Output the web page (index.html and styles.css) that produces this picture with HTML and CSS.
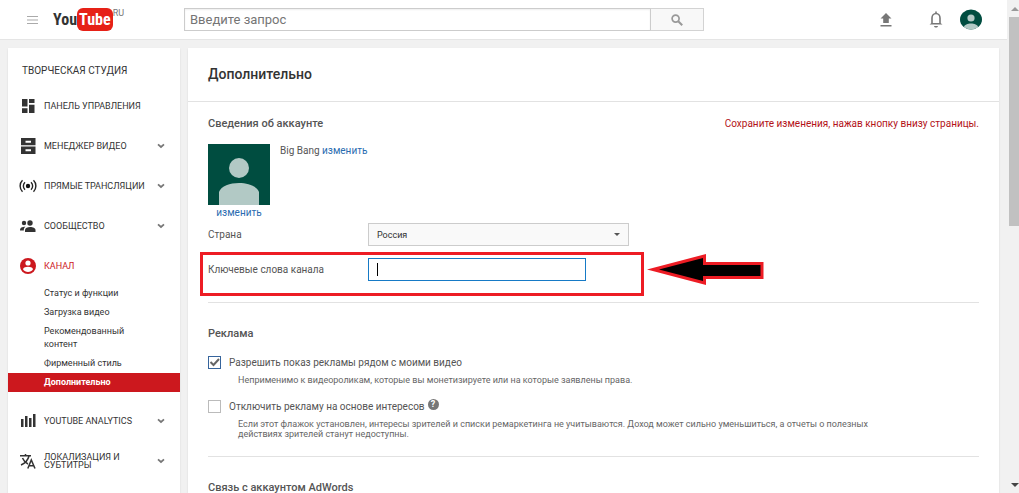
FILE: index.html
```html
<!DOCTYPE html>
<html lang="ru">
<head>
<meta charset="utf-8">
<title>Дополнительно - YouTube</title>
<link rel="stylesheet" href="styles.css">
</head>
<body>
<svg class="defs" aria-hidden="true">
  <symbol id="chevron" viewBox="0 0 8 6"><path d="M1 1.300L4 4l3-2.700" fill="none" stroke="#777" stroke-width="1.700"/></symbol>
  <symbol id="person" viewBox="0 0 62 61"><path fill="#004d40" d="M0 0h62v61H0z"/><circle cx="31" cy="24" r="10" fill="#b2c9c5"/><path d="M11 61V48C13 42 22 39 31 39s18 3 20 9v13z" fill="#b2c9c5"/></symbol>
</svg>
<div class="app">
  <div class="page">
    <header class="topbar">
      <button class="icon-btn menu" aria-label="Меню"><svg width="11" height="10" viewBox="0 0 11 10"><path d="M0 1.500h11M0 5h11M0 8.500h11" stroke="#aaa" stroke-width="1.200"/></svg></button>
      <a href="#" class="logo"><span class="you">You</span><span class="tube">Tube</span><span class="region">RU</span></a>
      <form class="search">
        <input class="search-input" type="text" placeholder="Введите запрос" aria-label="Поиск">
        <button class="search-btn" type="button" aria-label="Найти"><svg width="12" height="12" viewBox="0 0 12 12"><circle cx="4.600" cy="4.600" r="3.500" fill="none" stroke="#999" stroke-width="1.700"/><path d="M7.200 7.200l4 4" stroke="#999" stroke-width="2"/></svg></button>
      </form>
      <div class="actions">
        <button class="icon-btn" aria-label="Добавить видео"><svg width="12" height="14" viewBox="0 0 12 14"><path d="M6 0l5.500 5.500H8.800V10H3.200V5.500H.5zM.5 12h11v1.500H.5z" fill="#777"/></svg></button>
        <button class="icon-btn bell" aria-label="Уведомления"><svg width="14" height="17" viewBox="0 0 14 17"><path d="M3 12.500V7a4 4.500 0 0 1 8 0v5.500M7 2.500V0.500" fill="none" stroke="#777" stroke-width="1.600"/><path d="M0.500 13.500L2.500 12h9l2 1.500zM5 15h4c-.4 2-3.600 2-4 0z" fill="#777"/></svg></button>
        <button class="icon-btn" aria-label="Аккаунт"><svg class="me" width="22" height="21" viewBox="0 0 22 21"><ellipse cx="11" cy="10.500" rx="11" ry="10" fill="#004d40"/><circle cx="11" cy="9" r="3.600" fill="#b2c9c5"/><path d="M4 18c0-2 4-3.500 7-3.500s7 1.500 7 3.500c-3 3.300-11 3.300-14 0z" fill="#b2c9c5"/></svg></button>
      </div>
    </header>
    <div class="columns">
      <nav class="sidebar">
        <h2 class="side-title">ТВОРЧЕСКАЯ СТУДИЯ</h2>
        <a href="#" class="item"><svg class="ico" viewBox="0 0 16 16"><path fill="#333" d="M2 1h5.500v7.500H2zM9 1h5.500v4H9zM2 10.300h5.500V15H2zM9 6.800h5.500V15H9z"/></svg><span class="name">ПАНЕЛЬ УПРАВЛЕНИЯ</span></a>
        <a href="#" class="item"><svg class="ico" viewBox="0 0 16 16"><path fill="#333" fill-rule="evenodd" d="M1 0h14.500v7.300H1zM5.500 2.800v2h5.500v-2zM1 8.500h14.500V16H1zM5.500 11.300v2h5.500v-2z"/></svg><span class="name">МЕНЕДЖЕР ВИДЕО</span><svg class="chev"><use href="#chevron"/></svg></a>
        <a href="#" class="item"><svg class="ico" viewBox="0 0 16 16"><circle cx="8" cy="8" r="2.200" fill="#111"/><path d="M5 4.300a5 5 0 0 0 0 7.400M11 4.300a5 5 0 0 1 0 7.400M2.500 2.300a8 8 0 0 0 0 11.400M13.500 2.300a8 8 0 0 1 0 11.400" fill="none" stroke="#222" stroke-width="1.400"/></svg><span class="name">ПРЯМЫЕ ТРАНСЛЯЦИИ</span><svg class="chev"><use href="#chevron"/></svg></a>
        <a href="#" class="item"><svg class="ico" viewBox="0 0 16 16"><circle cx="4" cy="5" r="2.200" fill="#333"/><circle cx="10" cy="5" r="2.700" fill="#333"/><path fill="#333" d="M0 12.500C0 9.500 2 8.700 5.500 8.700 4 9.700 3.800 11 3.800 12.500zM5 14v-2c0-2 2.500-3 5.200-3s5.300 1 5.300 3v2z"/></svg><span class="name">СООБЩЕСТВО</span><svg class="chev"><use href="#chevron"/></svg></a>
        <a href="#" class="item active"><svg class="ico" viewBox="0 0 16 16"><circle cx="8" cy="8" r="8" fill="#cc181e"/><circle cx="8" cy="5" r="2.600" fill="#fff"/><path d="M3 11.300C3.300 9.500 6 8.800 8 8.800s4.700.7 5 2.500C12 13 10 14 8 14s-4-1-5-2.700z" fill="#fff"/></svg><span class="name">КАНАЛ</span></a>
        <ul class="sub">
          <li><a href="#">Статус и функции</a></li>
          <li><a href="#">Загрузка видео</a></li>
          <li><a href="#">Рекомендованный контент</a></li>
          <li><a href="#">Фирменный стиль</a></li>
          <li><a href="#" class="current">Дополнительно</a></li>
        </ul>
        <a href="#" class="item"><svg class="ico" viewBox="0 0 16 16"><path fill="#333" d="M1 6h2.500v8H1zM5 3h2.500v11H5zM9 5h2.500v9H9zM13 1h2.500v13H13z"/></svg><span class="name">YOUTUBE ANALYTICS</span><svg class="chev"><use href="#chevron"/></svg></a>
        <a href="#" class="item"><svg class="ico" viewBox="0 0 16 16"><path fill="none" stroke="#333" stroke-width="1.500" d="M0 2.800h11M5.500 1v2M9 3C8 7 4.500 10.500 1 12M2.500 5c1 2.500 3.500 5 5.500 6M7.800 15.500l3.500-8.500 3.700 8.500M9 12.700h4.700"/></svg><span class="name">ЛОКАЛИЗАЦИЯ И СУБТИТРЫ</span><svg class="chev"><use href="#chevron"/></svg></a>
      </nav>
      <main class="content">
        <h1 class="title">Дополнительно</h1>
        <section class="section account">
          <div class="section-head"><h2>Сведения об аккаунте</h2><p class="warning">Сохраните изменения, нажав кнопку внизу страницы.</p></div>
          <div class="profile">
            <div class="photo"><svg width="62" height="61"><use href="#person"/></svg><a href="#" class="link">изменить</a></div>
            <p class="channel">Big Bang <a href="#" class="link">изменить</a></p>
          </div>
          <div class="field"><label for="country">Страна</label><select id="country" class="country"><option>Россия</option></select></div>
          <div class="field keywords"><label for="keywords">Ключевые слова канала</label><span class="box"><input id="keywords" type="text"><i class="caret"></i></span>
            <div class="frame"></div>
            <svg class="arrow" width="119" height="33" viewBox="0 0 119 33"><path d="M0 16.500L59 1v8h57.500v17H59v6z" fill="#ed1c24"/><path d="M12 16.500L56 5v7h57.500v11H56v5z" fill="#000"/></svg>
          </div>
        </section>
        <section class="section ads">
          <h2>Реклама</h2>
          <div class="option"><input type="checkbox" id="allow" checked><label for="allow">Разрешить показ рекламы рядом с моими видео</label></div>
          <p class="hint">Неприменимо к видеороликам, которые вы монетизируете или на которые заявлены права.</p>
          <div class="option second"><input type="checkbox" id="disable"><label for="disable">Отключить рекламу на основе интересов</label><button class="help" aria-label="Справка">?</button></div>
          <p class="hint">Если этот флажок установлен, интересы зрителей и списки ремаркетинга не учитываются. Доход может сильно уменьшиться, а отчеты о полезных действиях зрителей станут недоступны.</p>
        </section>
        <section class="section"><h2>Связь с аккаунтом AdWords</h2></section>
      </main>
    </div>
  </div>
  <div class="scrollbar"><svg width="8" height="4" viewBox="0 0 8 4"><path d="M0 4l4-4 4 4z" fill="#999"/></svg><span class="thumb"></span><svg width="8" height="4" viewBox="0 0 8 4"><path d="M0 0h8L4 4z" fill="#444"/></svg></div>
</div>
</body>
</html>
```
FILE: styles.css
```css
* { box-sizing: border-box; }
body { margin: 0; background: #f1f1f1; color: #555; font: 11px/14px Roboto, "Liberation Sans", sans-serif; }
h1, h2, p, ul { margin: 0; padding: 0; }
a { color: inherit; text-decoration: none; }
button, input, select { font: inherit; margin: 0; }
svg { display: block; flex: none; }
.defs { position: absolute; width: 0; height: 0; }

.app { display: flex; height: 100vh; overflow: hidden; }
.page { flex: 1; min-width: 0; }

.topbar { display: flex; align-items: center; height: 40px; padding: 0 25px 0 27px; background: #fff; border-bottom: 1px solid #e5e5e5; }
.icon-btn { padding: 0; border: 0; background: none; }
.logo { display: flex; align-items: center; width: 131px; margin-left: 15px; }
.you, .tube { font: bold 16px/23px "Liberation Sans Narrow", "Roboto Condensed", "DejaVu Sans Condensed", sans-serif; color: #333; }
.tube { padding: 0 2px; border-radius: 6px; background: #e62117; color: #fff; }
.region { align-self: flex-start; font-size: 9px; line-height: 10px; color: #777; }
.search { display: flex; flex: 0 1 520px; height: 23px; }
.search-input { flex: 1; min-width: 0; padding: 0 5px; border: 1px solid #ccc; border-right: 0; box-shadow: inset 0 1px 2px #eee; font-size: 13px; }
.search-input::placeholder { color: #757575; }
.search-btn { display: flex; align-items: center; justify-content: center; width: 54px; padding: 0; border: 1px solid #d3d3d3; border-left-color: #ccc; background: #f8f8f8; }
.actions { display: flex; align-items: center; margin-left: auto; }
.bell { margin: 0 17px 0 37px; }

.columns { display: flex; align-items: stretch; gap: 8px; padding: 8px 8px 0; height: calc(100vh - 40px); }
.sidebar, .content { background: #fff; box-shadow: 0 1px 2px rgba(0, 0, 0, .1); }
.sidebar { display: flex; flex-direction: column; gap: 4px; flex: none; width: 172px; padding-top: 8px; color: #333; font-size: 9px; }
.side-title { padding-left: 14px; font-size: 10px; line-height: 30px; height: 28px; font-weight: 400; }
.item { display: flex; align-items: center; flex: none; height: 36px; padding: 0 15px 0 12px; line-height: 8px; }
.name { flex: 1; }
.ico { width: 16px; height: 16px; margin-right: 8px; overflow: visible; }
.chev { width: 8px; height: 6px; }
.active { color: #cc181e; }
.sub { margin: -4px 0 7px; list-style: none; line-height: 13px; }
.sub a { display: block; padding: 3px 40px 3px 36px; }
.sub .current { background: #cc181e; color: #fff; font-weight: 700; }

.content { flex: 1; min-width: 0; overflow: hidden; }
.title { padding: 0 20px; border-bottom: 1px solid #e2e2e2; font-size: 14px; line-height: 53px; font-weight: 500; color: #333; }
.section { margin: 0 20px; }
h2 { font-size: 11px; font-weight: 500; }
.section + .section { border-top: 1px solid #e2e2e2; padding-top: 24px; }
.section-head { display: flex; justify-content: space-between; align-items: center; height: 42px; padding-top: 2px; }
.warning { color: #b31217; font-size: 10px; }
.profile { display: flex; gap: 10px; height: 79px; }
.photo { width: 62px; text-align: center; font-size: 10px; line-height: 16px; }
.channel { font-size: 10px; }
.link { color: #2a6cb0; }
.field { display: flex; align-items: center; height: 23px; font-size: 10px; }
.field label { width: 160px; }
.country { width: 261px; height: 23px; padding: 0 8px; border: 1px solid #ccc; border-radius: 0; appearance: none; color: #333; font-size: 9px; background: url("data:image/svg+xml,%3Csvg xmlns='http://www.w3.org/2000/svg' width='6' height='3'%3E%3Cpath d='M0 0h6L3 3z' fill='%23555'/%3E%3C/svg%3E") no-repeat right 8px top 9px #f9f9f9; }
.keywords { position: relative; margin: 12px 0 21px; }
.box { position: relative; display: flex; width: 218px; }
.box input { width: 100%; height: 23px; border: 1px solid #167ac6; padding: 0 8px; }
.caret { position: absolute; left: 9px; top: 5px; width: 1px; height: 13px; background: #000; }
.frame { position: absolute; left: -8px; top: -6px; width: 444px; height: 44px; border: 3px solid #ed1c24; }
.arrow { position: absolute; left: 439px; top: -5px; }

.ads { padding-bottom: 17px; }
.ads h2 { margin-bottom: 15px; }
.option { display: flex; align-items: center; height: 13px; font-size: 10px; }
.option input { width: 13px; height: 13px; margin-right: 8px; border: 1px solid #bbb; appearance: none; background: #fff; }
.option input:checked { border-color: #36649c; background: url("data:image/svg+xml,%3Csvg xmlns='http://www.w3.org/2000/svg' width='11' height='11'%3E%3Cpath d='M1.500 5l3 3L10 2' fill='none' stroke='%23666' stroke-width='2'/%3E%3C/svg%3E"); }
.second { margin-top: 15px; }
.help { width: 11px; height: 11px; margin: -4px 0 0 3px; padding: 0; border: 0; border-radius: 50%; background: #777; color: #fff; font-size: 9px; line-height: 11px; font-weight: 700; }
.hint { margin: 6px 100px 0 30px; color: #666; font-size: 9px; line-height: 10px; }

.scrollbar { display: flex; flex-direction: column; align-items: flex-end; flex: none; width: 12px; padding: 7px 0 6px 2px; background: #f1f1f1; }
.thumb { width: 10px; height: 209px; margin: 6px 0 auto; background: #c1c1c1; }
```
